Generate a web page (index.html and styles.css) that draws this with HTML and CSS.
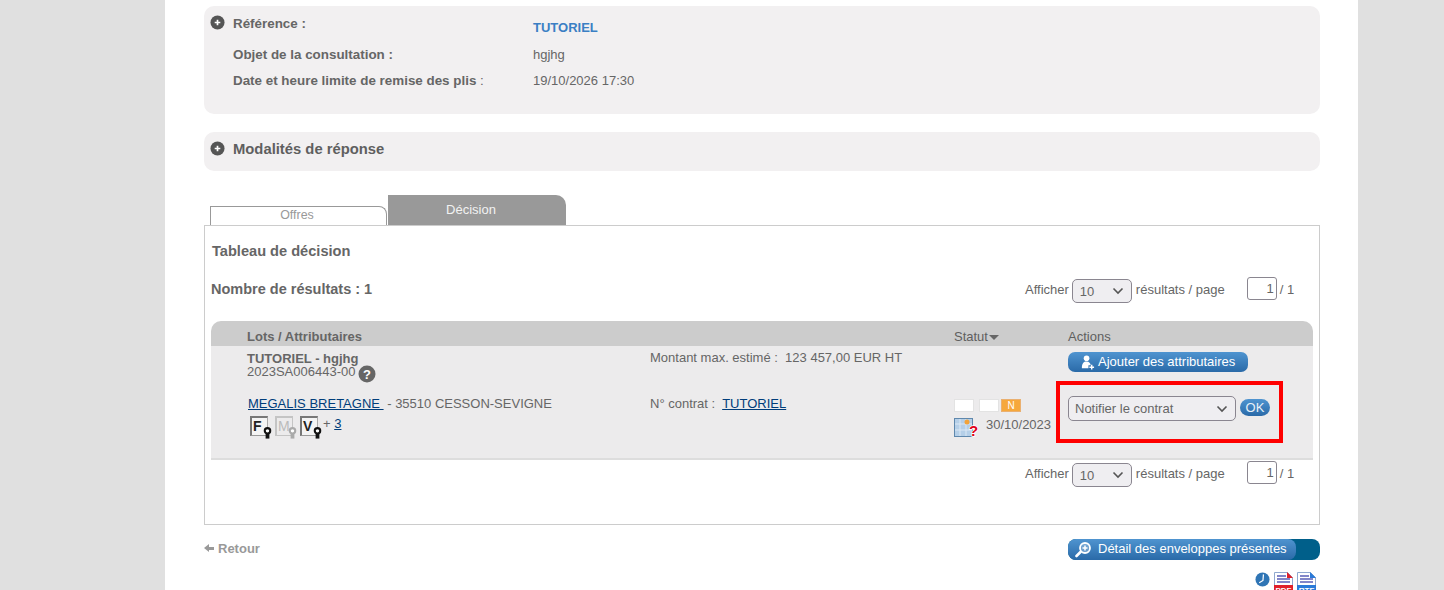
FILE: index.html
```html
<!DOCTYPE html>
<html lang="fr">
<head>
  <meta charset="UTF-8">
  <title>Tableau de décision</title>
  <link rel="stylesheet" href="styles.css">
</head>
<body>
<div class="page">

  <!-- Récapitulatif consultation -->
  <div class="panel recap">
    <svg class="plus" viewBox="0 0 16 16"><circle cx="8" cy="8" r="7.5" fill="#555"/><path d="M8 5v6M5 8h6" stroke="#fff" stroke-width="1.800"/></svg>
    <div class="recap-row first">
      <div class="label">Référence :</div>
      <div class="value ref">TUTORIEL</div>
    </div>
    <div class="recap-row second">
      <div class="label">Objet de la consultation :</div>
      <div class="value">hgjhg</div>
    </div>
    <div class="recap-row third">
      <div class="label">Date et heure limite de remise des plis <span class="thin">:</span></div>
      <div class="value">19/10/2026 17:30</div>
    </div>
  </div>

  <div class="panel modal">
    <svg class="plus" viewBox="0 0 16 16"><circle cx="8" cy="8" r="7.5" fill="#555"/><path d="M8 5v6M5 8h6" stroke="#fff" stroke-width="1.800"/></svg>
    <div class="modal-title">Modalités de réponse</div>
  </div>

  <!-- Onglets -->
  <div class="tabs">
    <div class="tab off">Offres</div>
    <div class="tab on">Décision</div>
  </div>

  <div class="tab-box">
    <div class="box-title">Tableau de décision</div>
    <div class="count-row">
      <div class="count">Nombre de résultats : 1</div>
      <div class="pager">
        <span>Afficher</span>
        <span class="fake-select small">10<svg viewBox="0 0 12 8"><path d="M1.5 1.5 6 6l4.500-4.500" fill="none" stroke="#555" stroke-width="1.600"/></svg></span>
        <span>résultats / page</span>
        <span class="page-num">1</span>
        <span>/ 1</span>
      </div>
    </div>

    <div class="table">
      <div class="thead">
        <div class="th-lots">Lots / Attributaires</div>
        <div></div>
        <div class="th">Statut<i class="caret"></i></div>
        <div class="th">Actions</div>
      </div>
      <div class="tbody">
        <div class="cell lot">
          <div class="lot-title">TUTORIEL - hgjhg</div>
          <div class="lot-ref">2023SA006443-00
            <svg class="help" viewBox="0 0 18 18"><circle cx="9" cy="9" r="8.500" fill="#666"/><text x="9" y="13.500" text-anchor="middle" class="help-mark">?</text></svg>
          </div>
        </div>
        <div class="cell">Montant max. estimé :&nbsp; 123 457,00 EUR HT</div>
        <div class="cell"></div>
        <div class="cell">
          <span class="btn add">
            <svg viewBox="0 0 16 16" width="15" height="15"><circle cx="7" cy="3.500" r="3" fill="#fff"/><path d="M2 14c0-5 2-7 5-7s4 2 4.500 4H9v3z" fill="#fff"/><path d="M12.500 10.500v5M10 13h5" stroke="#fff" stroke-width="1.500"/></svg>
            Ajouter des attributaires
          </span>
        </div>

        <div class="cell supplier">
          <div><a href="#">MEGALIS BRETAGNE&nbsp;</a> - 35510 CESSON-SEVIGNE</div>
          <div class="keys">
            <span class="key">F<svg viewBox="0 0 10 14"><circle cx="5" cy="4.500" r="3.200" fill="#fff" stroke="#111" stroke-width="2.400"/><path d="M2.800 8h4.400v5.500H2.800z" fill="#111"/></svg></span>
            <span class="key dim">M<svg viewBox="0 0 10 14"><circle cx="5" cy="4.500" r="3.200" fill="#fff" stroke="#aaa" stroke-width="2.400"/><path d="M2.800 8h4.400v5.500H2.800z" fill="#aaa"/></svg></span>
            <span class="key">V<svg viewBox="0 0 10 14"><circle cx="5" cy="4.500" r="3.200" fill="#fff" stroke="#111" stroke-width="2.400"/><path d="M2.800 8h4.400v5.500H2.800z" fill="#111"/></svg></span>
            <span class="more">+ <a href="#">3</a></span>
          </div>
        </div>
        <div class="cell supplier">N° contrat :&nbsp; <a href="#">TUTORIEL</a></div>
        <div class="cell status">
          <div class="flags"><span class="flag"></span><span class="flag"></span><span class="flag n">N</span></div>
          <div class="status-date">
            <svg class="cal" viewBox="0 0 24 26">
              <rect x="0.500" y="0.500" width="18" height="18" fill="#b5cfe8" stroke="#5f88ad"/>
              <path d="M6 1v17M12 1v17M1 6h17M1 12h17" stroke="#dbe8f4" stroke-width="1"/>
              <circle cx="13" cy="4" r="2.500" fill="#f2a33a"/>
              <text x="19.500" y="18" text-anchor="middle" class="cal-mark">?</text>
            </svg>
            <span>30/10/2023</span>
          </div>
        </div>
        <div class="cell action">
          <span class="fake-select wide">Notifier le contrat<svg viewBox="0 0 12 8"><path d="M1.500 1.500 6 6l4.500-4.500" fill="none" stroke="#555" stroke-width="1.600"/></svg></span>
          <span class="ok">OK</span>
          <div class="highlight"></div>
        </div>
      </div>
    </div>

    <div class="pager bottom">
      <span>Afficher</span>
      <span class="fake-select small">10<svg viewBox="0 0 12 8"><path d="M1.500 1.500 6 6l4.500-4.500" fill="none" stroke="#555" stroke-width="1.600"/></svg></span>
      <span>résultats / page</span>
      <span class="page-num">1</span>
      <span>/ 1</span>
    </div>
  </div>

  <!-- Bas de page -->
  <div class="foot">
    <a class="back" href="#"><i class="back-arrow"></i>Retour</a>
    <span class="detail">
      <span class="detail-in">
        <svg viewBox="0 0 16 16" width="16" height="16"><circle cx="10" cy="6" r="5" fill="#fff" fill-opacity=".25" stroke="#fff" stroke-width="1.800"/><path d="M10 3.500v5M7.500 6h5" stroke="#fff" stroke-width="1.500"/><path d="M5.500 10 1.500 14" stroke="#fff" stroke-width="2.600" stroke-linecap="round"/></svg>
        <span>Détail des enveloppes présentes</span>
      </span>
    </span>
  </div>
  <div class="exports">
    <svg class="clock" viewBox="0 0 16 16"><circle cx="8" cy="8" r="7.500" fill="#2f75b5"/><path d="M9 2.500 8.500 9 4.500 11.500" fill="none" stroke="#fff" stroke-width="1.300"/></svg>
    <svg class="doc" viewBox="0 0 19 22">
      <path d="M.5.500h13l5 5v16H.5z" fill="#fff" stroke="#8fa8cf"/><path d="M13 0l6 6h-6z" fill="#e0202a"/>
      <path d="M3 4h9M3 7h13M3 10h13" stroke="#5a5fb8" stroke-width="1.500"/><rect y="13" width="19" height="9" fill="#e0202a"/>
      <text x="9.500" y="21" text-anchor="middle" class="doc-mark">PDF</text>
    </svg>
    <svg class="doc" viewBox="0 0 19 22">
      <path d="M.5.500h13l5 5v16H.5z" fill="#fff" stroke="#8fa8cf"/><path d="M13 0l6 6h-6z" fill="#2a7ad8"/>
      <path d="M3 4h9M3 7h13M3 10h13" stroke="#5a5fb8" stroke-width="1.500"/><rect y="13" width="19" height="9" fill="#2a7ad8"/>
      <text x="9.500" y="21" text-anchor="middle" class="doc-mark">RTF</text>
    </svg>
  </div>
</div>
</body>
</html>
```

FILE: styles.css
```css
html, body { margin: 0; height: 590px; overflow: hidden; }
body {
  background: #e0e0e0;
  font-family: "Liberation Sans", Arial, sans-serif;
  font-size: 13px;
  color: #666;
}
a { color: #003d7a; }

.page {
  width: 1193px;
  height: 590px;
  margin-left: 165px;
  padding: 6px 38px 0 39px;
  box-sizing: border-box;
  background: #fff;
  overflow: hidden;
}

.panel {
  background: #f2f0f1;
  border-radius: 10px;
  position: relative;
}
.plus { position: absolute; left: 6px; width: 15px; height: 15px; }

/* recap */
.recap { height: 108px; box-sizing: border-box; padding-left: 29px; }
.recap .plus { top: 9px; }
.recap-row { display: grid; grid-template-columns: 300px 1fr; }
.recap-row.first { padding-top: 9px; height: 31px; }
.recap-row.second { height: 26px; }
.label { font-weight: bold; font-size: 13.400px; color: #666; line-height: 17px; }
.thin { font-weight: normal; }
.value { line-height: 17px; }
.ref { color: #3b7fc4; font-weight: bold; padding-top: 4px; }

.modal { height: 39px; margin-top: 18px; padding-left: 29px; display: flex; align-items: center; }
.modal .plus { top: 9px; }
.modal-title { font-size: 14.800px; font-weight: bold; color: #5f5f5f; margin-top: -5px; }

/* onglets */
.tabs { display: flex; align-items: flex-end; height: 30px; margin: 24px 0 0 6px; gap: 1px; }
.tab { box-sizing: border-box; text-align: center; }
.tab.off {
  width: 177px; height: 19px; line-height: 17px;
  border: 1px solid #999; border-bottom: none;
  border-top-right-radius: 8px;
  color: #999;
  font-size: 12.400px;
  padding-right: 3px;
}
.tab.on {
  width: 178px; height: 30px; line-height: 29px;
  background: #999; color: #f2f2f2;
  border-top-right-radius: 10px;
  padding-right: 12px;
}

.tab-box {
  box-sizing: border-box;
  height: 300px;
  border: 1px solid #ccc;
  padding: 0 6px;
}
.box-title { font-weight: bold; font-size: 14.600px; color: #666; padding: 18px 0 0 1px; line-height: 15px; }
.count-row { display: flex; justify-content: space-between; margin-top: 18px; height: 24px; }
.count { font-size: 14.500px; font-weight: bold; line-height: 24px; color: #666; }

.pager {
  display: flex;
  align-items: center;
  margin-right: 18px;
  width: 270px;
  white-space: nowrap;
}
.pager .fake-select { margin: 4px 4px 0 3px; }
.page-num {
  box-sizing: border-box;
  width: 30px; height: 23px; line-height: 21px;
  margin: -2px 3px 0 22px;
  padding-right: 2px;
  border: 1px solid #8a8690;
  border-radius: 3px;
  text-align: right;
  background: #fff;
}
.pager.bottom { margin: 1px 18px 0 auto; height: 24px; }

.fake-select {
  display: inline-flex;
  align-items: center;
  justify-content: space-between;
  box-sizing: border-box;
  border: 1px solid #8a8690;
  border-radius: 5px;
  background: #efeef1;
}
.fake-select svg { width: 12px; height: 8px; }
.fake-select.small { width: 60px; height: 24px; padding: 0 7px 0 7px; }
.fake-select.wide { width: 168px; height: 25px; padding: 0 7px 0 6px; }

/* tableau */
.table { margin-top: 20px; }
.thead, .tbody {
  display: grid;
  grid-template-columns: 439px 304px 114px 245px;
}
.thead {
  height: 25px;
  line-height: 32px;
  background: #ccc;
  border-radius: 10px 10px 0 0;
}
.th-lots { padding-left: 36px; font-weight: bold; color: #666; }
.th { color: #5f5f5f; }
.caret {
  display: inline-block;
  margin: 0 0 0 1px;
  border: 5px solid transparent;
  border-top: 5px solid #666;
  border-bottom: none;
  vertical-align: 1px;
}
.tbody {
  height: 114px;
  box-sizing: border-box;
  background: #ecebec;
  border-bottom: 2px solid #ddd;
  grid-template-rows: 40px 1fr;
}
.cell { line-height: 14px; padding-top: 5px; }
.tbody .cell:first-child { padding-left: 36px; }
.lot-title { font-weight: bold; line-height: 13px; margin-top: 1px; }
.lot-ref { line-height: 13px; }
.help { width: 18px; height: 18px; vertical-align: -7px; margin-left: -1px; }
.help-mark { font: bold 13px "Liberation Sans", sans-serif; fill: #fff; }

.btn {
  display: inline-flex;
  align-items: center;
  gap: 3px;
  box-sizing: border-box;
  height: 20px;
  padding: 0 12px;
  width: 180px;
  margin-top: 1px;
  border-radius: 7px;
  color: #fff;
  white-space: nowrap;
  background: linear-gradient(#4f94d0, #2a6aa8);
}

.supplier { padding-top: 11px; }
.supplier:nth-child(5) { padding-left: 37px; }
.keys { display: flex; gap: 7px; margin: 4px 0 0 2px; height: 24px; }
.key {
  position: relative;
  box-sizing: border-box;
  width: 18px; height: 20px;
  margin-top: 1px;
  border: 1px solid #777;
  border-top-width: 2px;
  border-left-width: 2px;
  border-right-color: #aaa;
  border-bottom-color: #999;
  background: #f4f4f4;
  font: bold 14px/16px "Liberation Sans", sans-serif;
  color: #222;
  padding-left: 1px;
}
.key svg { position: absolute; right: -5px; bottom: -4px; width: 9px; height: 12px; }
.key.dim { border-color: #c4c4c4; color: #bbb; background: none; font-weight: normal; }
.more { margin: 2px 0 0 -2px; line-height: 14px; }

.status { padding-top: 13px; }
.flags { display: flex; gap: 5px; }
.flag { box-sizing: border-box; width: 20px; height: 13px; background: #fff; border: 1px solid #e3e3e3; }
.flag.n { background: #f6a83c; color: #fff; font-size: 10px; line-height: 11px; text-align: center; margin-left: -3px; border-color: #eab070; }
.status-date { display: flex; align-items: flex-start; gap: 8px; margin-top: 6px; height: 20px; }
.cal { width: 24px; height: 26px; flex: none; }
.cal-mark { font: bold 15px "Liberation Sans", sans-serif; fill: #e0001a; stroke: #fff; stroke-width: 1.500px; paint-order: stroke; }
.status-date span { line-height: 14px; }

.action { position: relative; display: flex; align-items: flex-start; gap: 4px; padding-top: 10px; }
.ok {
  width: 30px; height: 17px; line-height: 17px; margin-top: 3px;
  text-align: center; color: #e8f1f8;
  border-radius: 9px;
  background: linear-gradient(#4f94d0, #2a6aa8);
}
.highlight {
  position: absolute;
  left: -12px; top: -5px;
  width: 227px; height: 62px;
  box-sizing: border-box;
  border: 4px solid #f00;
}

/* bas */
.foot { display: flex; justify-content: space-between; align-items: center; height: 21px; margin-top: 14px; }
.back { color: #999; font-weight: bold; text-decoration: none; display: flex; align-items: center; gap: 4px; margin-top: -2px; }
.back-arrow {
  display: inline-block;
  width: 5px; height: 3px;
  margin-left: 5px;
  background: #999;
  position: relative;
}
.back-arrow::before {
  content: "";
  position: absolute;
  left: -5px; top: -3px;
  border: 4.500px solid transparent;
  border-right: 5px solid #999;
  border-left: none;
}
.detail {
  width: 252px; height: 21px;
  border-radius: 8px;
  background: #005f8a;
  display: block;
}
.detail-in {
  display: flex; align-items: center; gap: 7px;
  box-sizing: border-box;
  width: 228px; height: 21px;
  padding-left: 7px;
  border-radius: 8px;
  color: #fff;
  white-space: nowrap;
  background: linear-gradient(#4f94d0, #2a6aa8);
}
.detail-in span { margin-top: -2px; }
.exports { display: flex; justify-content: flex-end; gap: 4px; margin-top: 12px; padding-right: 4px; align-items: flex-start; }
.clock { width: 15px; height: 15px; }
.doc { width: 19px; height: 22px; }
.doc-mark { font: bold 8px "Liberation Sans", sans-serif; fill: #fff; }
```
